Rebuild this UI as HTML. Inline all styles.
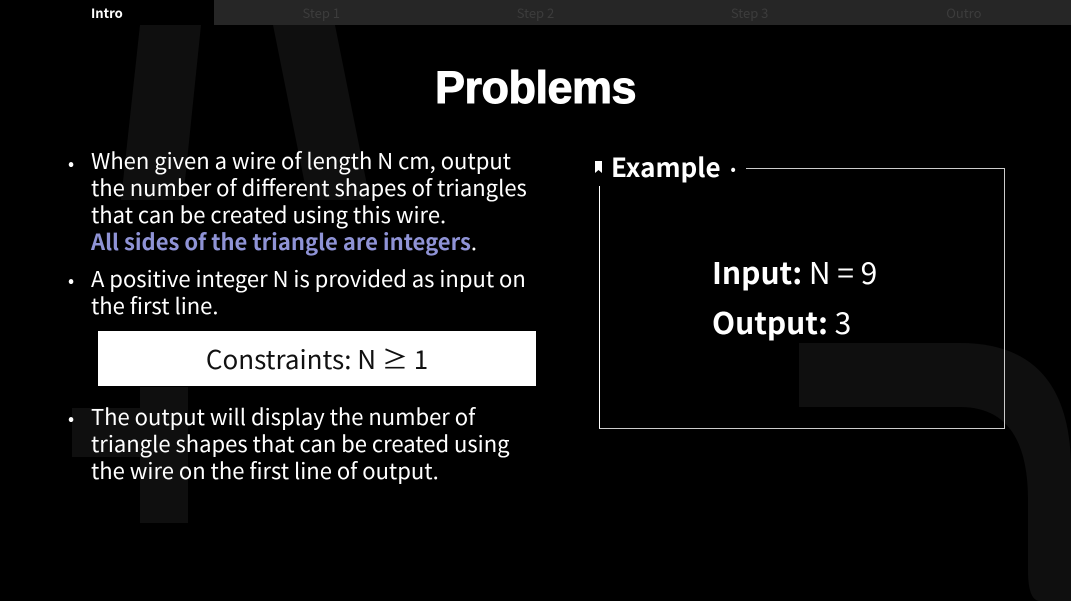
<!DOCTYPE html>
<html><head><meta charset="utf-8"><style>
body{margin:0;width:1071px;height:601px;background:#000;overflow:hidden;position:relative;font-family:"Noto Sans CJK KR","Liberation Sans",sans-serif;color:#fff}
.tabs{position:absolute;top:0;left:0;width:1071px;height:25px;background:#262626;display:flex}
.tabs div{width:214.2px;text-align:center;font-size:13px;line-height:25px;color:#3c3c3c}
.tabs div.on{background:#000;color:#fff;text-align:left;padding-left:91px;box-sizing:border-box;font-weight:bold}
h1{position:absolute;top:62px;left:0;width:1071px;text-align:center;margin:0;font-size:45px;font-weight:900;font-family:"Liberation Sans",sans-serif;letter-spacing:-0.5px;-webkit-text-stroke:1px #fff}
.txt{position:absolute;left:91px;font-size:22px;line-height:27px;white-space:nowrap}
.b{position:absolute;left:68px;font-size:18px}
.box{position:absolute;left:98px;top:331px;width:438px;height:55px;background:#fff;color:#111;font-size:26px;text-align:center;line-height:55px}
.ex{position:absolute;left:599px;top:168px;width:404px;height:259px;border:1.5px solid #ccc;border-left-color:#fff}
</style></head><body>
<svg style="position:absolute;left:0;top:0" width="1071" height="601">
<path d="M140 25 L201 25 L183 200 L121 200Z" fill="#0f0f0f"/>
<path d="M273 25 L335 25 L370 200 L308 200Z" fill="#0f0f0f"/>
<rect x="140" y="387" width="48" height="136" fill="#0f0f0f"/>
<rect x="72" y="408" width="68" height="49" fill="#0f0f0f"/>
<path d="M799 343 L960 343 Q1071 343 1071 470 L1071 601 L799 601Z" fill="#0f0f0f"/>
<path d="M799 407 L960 407 Q1028 407 1028 500 L1028 570 Q1028 601 1040 601 L799 601Z" fill="#000"/>
</svg>
<div class="tabs"><div class="on">Intro</div><div>Step 1</div><div>Step 2</div><div>Step 3</div><div>Outro</div></div>
<h1>Problems</h1>
<div class="b" style="top:150px">•</div>
<div class="txt" style="top:147px">When given a wire of length N cm, output<br>the number of different shapes of triangles<br>that can be created using this wire.<br><b style="color:#8f93d6">All sides of the triangle are integers</b>.</div>
<div class="b" style="top:267px">•</div>
<div class="txt" style="top:265px">A positive integer N is provided as input on<br>the first line.</div>
<div class="box">Constraints: N ≥ 1</div>
<div class="b" style="top:405px">•</div>
<div class="txt" style="top:403px">The output will display the number of<br>triangle shapes that can be created using<br>the wire on the first line of output.</div>
<div class="ex"></div>
<div style="position:absolute;left:590px;top:150px;background:#000;padding:0 10px 0 5px;font-size:26px;font-weight:bold;line-height:34px"><span style="display:inline-block;width:7px;height:12px;background:#fff;margin-right:9px;vertical-align:4px;clip-path:polygon(0 0,100% 0,100% 100%,50% 75%,0 100%)"></span>Example <span style="font-size:14px;vertical-align:3px;margin-left:4px">•</span></div>
<div style="position:absolute;left:712px;top:246px;font-size:30px;line-height:50px"><b>Input:</b> N = 9<br><b>Output:</b> 3</div>
</body></html>
